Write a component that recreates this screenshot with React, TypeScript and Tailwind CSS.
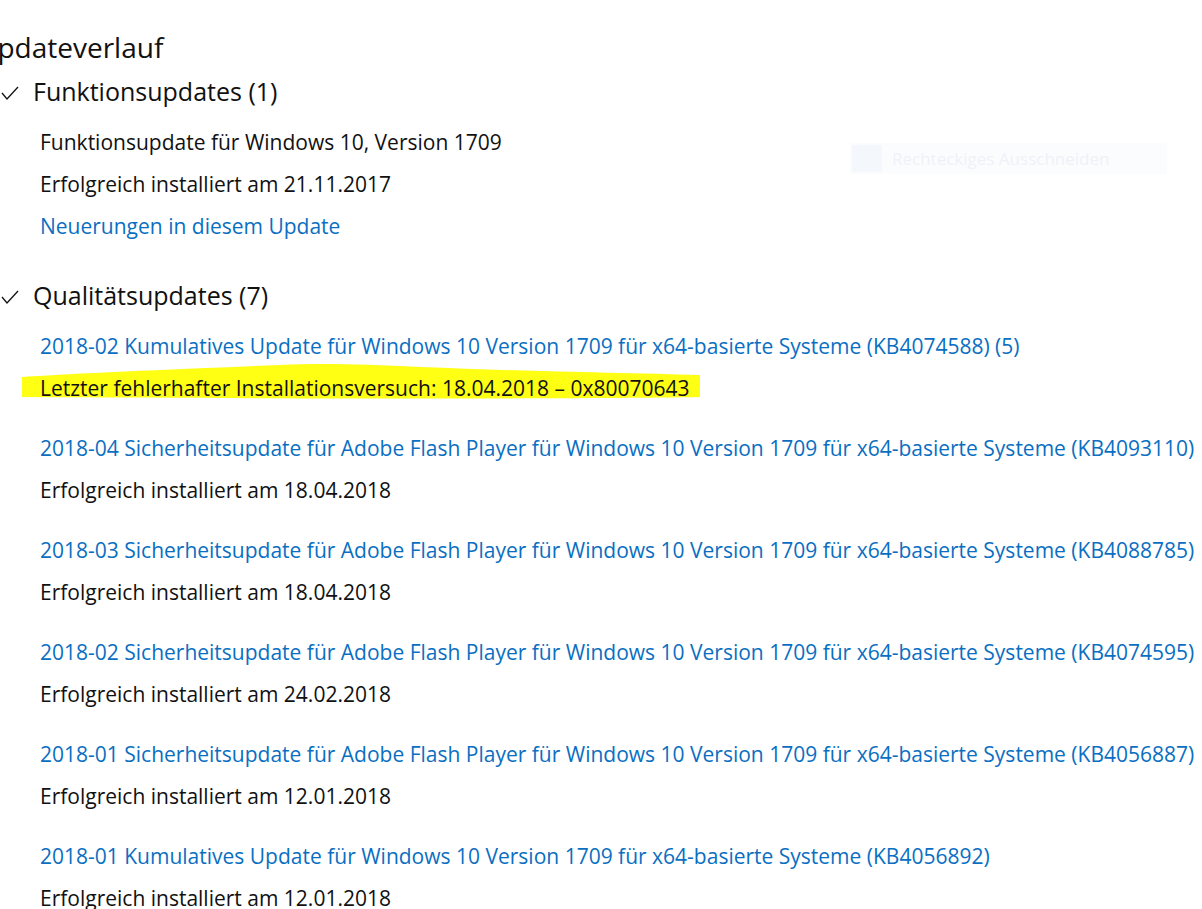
import React from "react";

const font = { fontFamily: '"Open Sans", "Noto Sans", sans-serif' };

type Item = { title: string; status: string; highlight?: boolean };

const items: Item[] = [
  {
    title:
      "2018-02 Kumulatives Update für Windows 10 Version 1709 für x64-basierte Systeme (KB4074588) (5)",
    status: "Letzter fehlerhafter Installationsversuch: 18.04.2018 – 0x80070643",
    highlight: true,
  },
  {
    title:
      "2018-04 Sicherheitsupdate für Adobe Flash Player für Windows 10 Version 1709 für x64-basierte Systeme (KB4093110)",
    status: "Erfolgreich installiert am 18.04.2018",
  },
  {
    title:
      "2018-03 Sicherheitsupdate für Adobe Flash Player für Windows 10 Version 1709 für x64-basierte Systeme (KB4088785)",
    status: "Erfolgreich installiert am 18.04.2018",
  },
  {
    title:
      "2018-02 Sicherheitsupdate für Adobe Flash Player für Windows 10 Version 1709 für x64-basierte Systeme (KB4074595)",
    status: "Erfolgreich installiert am 24.02.2018",
  },
  {
    title:
      "2018-01 Sicherheitsupdate für Adobe Flash Player für Windows 10 Version 1709 für x64-basierte Systeme (KB4056887)",
    status: "Erfolgreich installiert am 12.01.2018",
  },
  {
    title:
      "2018-01 Kumulatives Update für Windows 10 Version 1709 für x64-basierte Systeme (KB4056892)",
    status: "Erfolgreich installiert am 12.01.2018",
  },
];

function Check() {
  return (
    <svg width="20" height="16" viewBox="0 0 20 16" className="shrink-0">
      <polyline
        points="2,8 7,14 18,2"
        fill="none"
        stroke="#111"
        strokeWidth="1.3"
      />
    </svg>
  );
}

function Heading({ children }: { children: React.ReactNode }) {
  return (
    <div className="flex h-[48px] items-center">
      <div className="ml-[0px] mr-[13px] mt-[2px]">
        <Check />
      </div>
      <span className="text-[25px] text-[#111]">{children}</span>
    </div>
  );
}

function Highlight() {
  return (
    <svg
      className="absolute left-[-20px] top-[-6px]"
      width="682"
      height="42"
      viewBox="0 0 682 42"
      preserveAspectRatio="none"
    >
      <path
        d="M2,16 C60,12 160,8 260,4 C300,2 340,3 400,6 C500,10 600,12 680,14 L680,36 C560,38 300,38 2,36 Z"
        fill="#ffff14"
      />
    </svg>
  );
}

export default function App() {
  return (
    <div
      className="relative h-[909px] w-[1202px] overflow-hidden bg-white pt-[26px]"
      style={font}
    >
      {/* ghost overlay */}
      <div className="absolute left-[850px] top-[143px] flex h-[31px] w-[317px] items-center bg-[#fbfcfe]">
        <div className="ml-[2px] h-[27px] w-[30px] bg-[#f4f7fb]" />
        <span className="ml-[10px] text-[17px] text-[#eef2f8]">
          Rechteckiges Ausschneiden
        </span>
      </div>

      <div className="ml-[-23px] h-[42px] text-[28px] leading-[42px] text-[#111]">
        Updateverlauf
      </div>

      <Heading>Funktionsupdates (1)</Heading>

      <div className="mt-[5px] pl-[40px] text-[21px] leading-[42px]">
        <div className="text-[#111]">
          Funktionsupdate für Windows 10, Version 1709
        </div>
        <div className="text-[#111]">Erfolgreich installiert am 21.11.2017</div>
        <div className="text-[#0a6fc2]">Neuerungen in diesem Update</div>
      </div>

      <div className="mt-[25px]">
        <Heading>Qualitätsupdates (7)</Heading>
      </div>

      <div className="mt-[5px] flex flex-col gap-[18px] pl-[40px] text-[21px] leading-[42px]">
        {items.map((it, i) => (
          <div key={i}>
            <div className="whitespace-nowrap text-[#0a6fc2]">{it.title}</div>
            <div className="relative whitespace-nowrap text-[#111]">
              {it.highlight && <Highlight />}
              <span className="relative">{it.status}</span>
            </div>
          </div>
        ))}
      </div>
    </div>
  );
}
